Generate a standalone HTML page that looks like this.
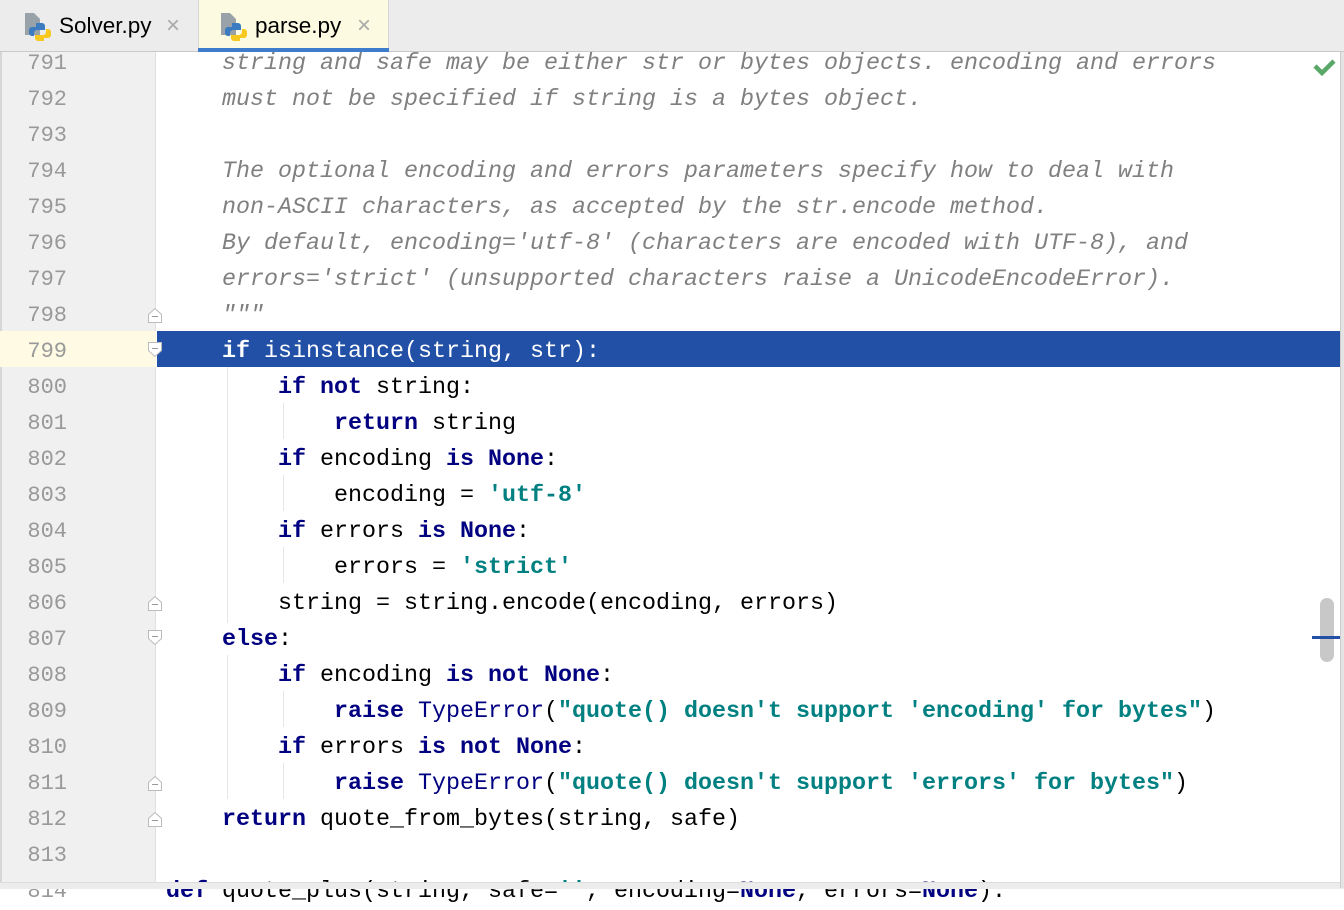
<!DOCTYPE html>
<html><head><meta charset="utf-8"><style>
body{margin:0;width:1344px;height:888px;overflow:hidden;background:#fff;position:relative;font-family:"Liberation Mono",monospace}
.tabs{position:absolute;left:0;top:0;width:1344px;height:52px;background:#ececec;border-bottom:1px solid #c9c9c9;box-sizing:border-box;z-index:5}
.tab{position:absolute;top:0;height:52px;font-family:"Liberation Sans",sans-serif;font-size:22.5px;color:#000;line-height:52px}
.gut{position:absolute;left:0;top:52px;width:156px;height:836px;background:#f0f0f0;border-right:1px solid #e0e0e0;border-left:2px solid #d6d6d6;box-sizing:border-box}
.ln{position:absolute;left:0;width:67px;text-align:right;color:#999;font-size:22px;line-height:36px;height:36px;margin-top:2px}
.cl{position:absolute;left:166px;font-size:23.33px;line-height:36px;height:36px;white-space:pre;color:#000;margin-top:2px}
.c{color:#808080;font-style:italic}
.k{color:#000080;font-weight:bold}
.s{color:#008080;font-weight:bold}
.g{position:absolute;width:1px;background:#e6e6e6}
</style></head><body>
<div class="gut"></div>
<div style="position:absolute;left:0;top:331px;width:156px;height:36px;background:#fefae3"></div>
<div style="position:absolute;left:157px;top:331px;width:1183px;height:36px;background:#2150a6"></div>
<div class="g" style="left:227px;top:367px;height:256px"></div>
<div class="g" style="left:283px;top:403px;height:36px"></div>
<div class="g" style="left:283px;top:475px;height:36px"></div>
<div class="g" style="left:283px;top:547px;height:36px"></div>
<div class="g" style="left:227px;top:655px;height:144px"></div>
<div class="g" style="left:283px;top:691px;height:36px"></div>
<div class="g" style="left:283px;top:763px;height:36px"></div>

<div class="ln" style="top:44px">791</div><div class="ln" style="top:80px">792</div><div class="ln" style="top:116px">793</div><div class="ln" style="top:152px">794</div><div class="ln" style="top:188px">795</div><div class="ln" style="top:224px">796</div><div class="ln" style="top:260px">797</div><div class="ln" style="top:296px">798</div><div class="ln" style="top:332px">799</div><div class="ln" style="top:368px">800</div><div class="ln" style="top:404px">801</div><div class="ln" style="top:440px">802</div><div class="ln" style="top:476px">803</div><div class="ln" style="top:512px">804</div><div class="ln" style="top:548px">805</div><div class="ln" style="top:584px">806</div><div class="ln" style="top:620px">807</div><div class="ln" style="top:656px">808</div><div class="ln" style="top:692px">809</div><div class="ln" style="top:728px">810</div><div class="ln" style="top:764px">811</div><div class="ln" style="top:800px">812</div><div class="ln" style="top:836px">813</div><div class="ln" style="top:872px">814</div>

<svg style="position:absolute;left:146px;top:0" width="20" height="888">
<g fill="#fff" stroke="#bbb" stroke-width="1">
<path d="M2.5 314.5 L9 308.5 L15.5 314.5 V322.5 H2.5Z"/><path d="M2.5 342.5 H15.5 V350.5 L9 356.5 L2.5 350.5Z"/>
<path d="M2.5 602.5 L9 596.5 L15.5 602.5 V610.5 H2.5Z"/><path d="M2.5 630.5 H15.5 V638.5 L9 644.5 L2.5 638.5Z"/>
<path d="M2.5 782.5 L9 776.5 L15.5 782.5 V790.5 H2.5Z"/><path d="M2.5 818.5 L9 812.5 L15.5 818.5 V826.5 H2.5Z"/>
</g>
<g stroke="#999" stroke-width="1"><path d="M6 316.5H12M6 348.5H12M6 604.5H12M6 636.5H12M6 784.5H12M6 820.5H12"/></g>
</svg>

<div class="cl c" style="top:44px">    string and safe may be either str or bytes objects. encoding and errors</div>
<div class="cl c" style="top:80px">    must not be specified if string is a bytes object.</div>
<div class="cl c" style="top:152px">    The optional encoding and errors parameters specify how to deal with</div>
<div class="cl c" style="top:188px">    non-ASCII characters, as accepted by the str.encode method.</div>
<div class="cl c" style="top:224px">    By default, encoding='utf-8' (characters are encoded with UTF-8), and</div>
<div class="cl c" style="top:260px">    errors='strict' (unsupported characters raise a UnicodeEncodeError).</div>
<div class="cl c" style="top:296px">    """</div>
<div class="cl" style="top:332px;color:#fff">    <b>if</b> isinstance(string, str):</div>
<div class="cl" style="top:368px">        <span class="k">if not</span> string:</div>
<div class="cl" style="top:404px">            <span class="k">return</span> string</div>
<div class="cl" style="top:440px">        <span class="k">if</span> encoding <span class="k">is None</span>:</div>
<div class="cl" style="top:476px">            encoding = <span class="s">'utf-8'</span></div>
<div class="cl" style="top:512px">        <span class="k">if</span> errors <span class="k">is None</span>:</div>
<div class="cl" style="top:548px">            errors = <span class="s">'strict'</span></div>
<div class="cl" style="top:584px">        string = string.encode(encoding, errors)</div>
<div class="cl" style="top:620px">    <span class="k">else</span>:</div>
<div class="cl" style="top:656px">        <span class="k">if</span> encoding <span class="k">is not None</span>:</div>
<div class="cl" style="top:692px">            <span class="k">raise</span> <span style="color:#000080">TypeError</span>(<span class="s">"quote() doesn't support 'encoding' for bytes"</span>)</div>
<div class="cl" style="top:728px">        <span class="k">if</span> errors <span class="k">is not None</span>:</div>
<div class="cl" style="top:764px">            <span class="k">raise</span> <span style="color:#000080">TypeError</span>(<span class="s">"quote() doesn't support 'errors' for bytes"</span>)</div>
<div class="cl" style="top:800px">    <span class="k">return</span> quote_from_bytes(string, safe)</div>
<div class="cl" style="top:872px"><span class="k">def</span> quote_plus(string, safe=<span class="s">''</span>, encoding=<span class="k">None</span>, errors=<span class="k">None</span>):</div>

<div style="position:absolute;left:0;top:882px;width:1344px;height:6px;background:#ececec;border-top:1px solid #ddd"></div>
<div style="position:absolute;left:1340px;top:52px;width:4px;height:836px;background:#e4e4e4;border-left:1px solid #ccc"></div>
<div style="position:absolute;left:1320px;top:598px;width:14px;height:64px;background:#c8c8c8;border-radius:7px"></div>
<div style="position:absolute;left:1312px;top:636px;width:28px;height:3px;background:#2150a6"></div>
<svg style="position:absolute;left:1312px;top:56px" width="26" height="22"><path d="M3 10 L10 17 L22 5" fill="none" stroke="#59a869" stroke-width="4.5"/></svg>

<div class="tabs">
 <div style="position:absolute;left:198px;top:0;width:191px;height:51px;background:#fcfbe1;border-left:1px solid #d6d6d6;border-right:1px solid #d6d6d6;box-sizing:border-box"></div>
 <div style="position:absolute;left:198px;top:48px;width:191px;height:4px;background:#3d7dcc"></div>
 <svg style="position:absolute;left:24px;top:12px" width="28" height="30"><path d="M1 1h9l6 6v16H1z" fill="#9aa2a9"/><path d="M12 11h6a3 3 0 0 1 3 3v4h-8a3 3 0 0 0-3 3v3h-2a3 3 0 0 1-3-3v-3a3 3 0 0 1 3-3h4z" fill="#3b7bbf"/><path d="M20 29h-6a3 3 0 0 1-3-3v-3h8a3 3 0 0 0 3-3v-3h2a3 3 0 0 1 3 3v3a3 3 0 0 1-3 3h-4z" fill="#f7c81e"/></svg>
 <div class="tab" style="left:59px">Solver.py</div>
 <div class="tab" style="left:166px;color:#aaa;font-size:24px">×</div>
 <svg style="position:absolute;left:220px;top:12px" width="28" height="30"><path d="M1 1h9l6 6v16H1z" fill="#9aa2a9"/><path d="M12 11h6a3 3 0 0 1 3 3v4h-8a3 3 0 0 0-3 3v3h-2a3 3 0 0 1-3-3v-3a3 3 0 0 1 3-3h4z" fill="#3b7bbf"/><path d="M20 29h-6a3 3 0 0 1-3-3v-3h8a3 3 0 0 0 3-3v-3h2a3 3 0 0 1 3 3v3a3 3 0 0 1-3 3h-4z" fill="#f7c81e"/></svg>
 <div class="tab" style="left:255px">parse.py</div>
 <div class="tab" style="left:357px;color:#aaa;font-size:24px">×</div>
</div>
</body></html>
